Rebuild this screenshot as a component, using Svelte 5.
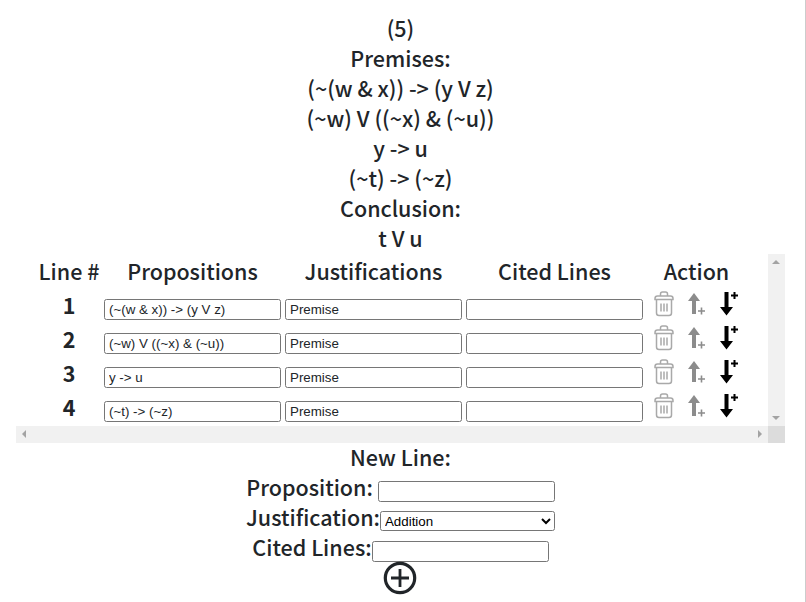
<script>
  const lines = [
    { n: 1, prop: '(~(w & x)) -> (y V z)' },
    { n: 2, prop: '(~w) V ((~x) & (~u))' },
    { n: 3, prop: 'y -> u' },
    { n: 4, prop: '(~t) -> (~z)' }
  ];
  const info = ['(5)', 'Premises:', ...lines.map((l) => l.prop), 'Conclusion:', 't V u'];
</script>

<main class="page">
  {#each info as text}
    <div>{text}</div>
  {/each}

  <div class="scroller">
    <div class="view">
      <div class="row head">
        <div>Line #</div>
        <div>Propositions</div>
        <div>Justifications</div>
        <div>Cited Lines</div>
        <div>Action</div>
      </div>
      {#each lines as line}
        <div class="row">
          <div class="num">{line.n}</div>
          <input type="text" value={line.prop} />
          <input type="text" value="Premise" />
          <input type="text" value="" />
          <div class="actions">
            <svg width="21" height="26" viewBox="0 0 21 26" fill="none" stroke="#a9a9a9" stroke-width="1.500">
              <path d="M1 7.500Q1 5 3.500 5h13Q19 5 19 7.500v1H1zM6.500 5V3Q6.500 1 8.500 1h3Q13.500 1 13.500 3V5" />
              <path d="M2.500 9v13q0 2.500 2.500 2.500h10q2.500 0 2.500-2.500V9" />
              <path d="M7 12.500v8M10 12.500v8M13 12.500v8" />
            </svg>
            <svg width="19" height="26" viewBox="0 0 19 26" fill="#8c8c8c">
              <path d="M6 2l6 8h-4v13h-4v-13h-4z" />
              <path d="M12.700 16.500h1.600v2.700h2.700v1.600h-2.700v2.700h-1.600v-2.700h-2.700v-1.600h2.700z" />
            </svg>
            <svg width="20" height="26" viewBox="0 0 20 26" fill="#000">
              <path d="M4.500 1h4v15h4.500l-6.500 8.500-6.500-8.500h4.500z" />
              <path d="M13.500 1h2v2.500h2.500v2h-2.500v2.500h-2v-2.500h-2.500v-2h2.500z" />
            </svg>
          </div>
        </div>
      {/each}
    </div>
    <div class="vbar">
      <span class="tri up"></span>
      <span class="tri down"></span>
    </div>
    <div class="hbar">
      <span class="tri left"></span>
      <span class="tri right"></span>
    </div>
    <div class="corner"></div>
  </div>

  <div>New Line:</div>
  <div class="field">Proposition: <input type="text" /></div>
  <div class="field">Justification:<select><option>Addition</option></select></div>
  <div class="field">Cited Lines:<input type="text" /></div>
  <div class="add">
    <svg width="34" height="34" viewBox="0 0 34 34" fill="none" stroke="#212529">
      <circle cx="17" cy="17" r="14.700" stroke-width="3.200" />
      <path d="M17 8v18M8 17h18" stroke-width="2.800" />
    </svg>
  </div>
</main>

<style>
  :global(body) {
    background: #fff;
  }

  .page {
    box-sizing: border-box;
    width: 806px;
    height: 602px;
    padding: 13px 4px 0 0;
    border-right: 1px solid #ccc;
    overflow: hidden;
    text-align: center;
    font-family: "Noto Sans CJK JP", "Noto Sans", sans-serif;
    font-size: 21.500px;
    font-weight: 500;
    line-height: 30px;
    color: #212529;
  }

  .scroller {
    display: grid;
    grid-template-columns: 752px 17px;
    grid-template-rows: 172px 17px;
    margin: 1px 0 -1px 16px;
    width: 769px;
  }

  .view {
    padding-left: 20px;
    overflow: hidden;
  }

  .row {
    display: grid;
    grid-template-columns: 66px 181px 181px 181px 103px;
    height: 34px;
    align-items: center;
  }

  .row input {
    width: 177px;
    justify-self: center;
    margin-top: 6px;
  }

  .head {
    height: 36px;
    margin-top: -1px;
  }

  .num {
    margin-top: -3px;
    font-weight: 700;
  }

  .actions {
    display: flex;
    align-items: center;
    gap: 13px;
    padding-left: 9px;
    margin-top: -4px;
  }

  input,
  select {
    box-sizing: border-box;
    height: 21px;
    width: 177px;
    padding: 1px 4px;
    border: 1px solid #767676;
    border-radius: 2.500px;
    background: #fff;
    font-family: "Liberation Sans", Arial, sans-serif;
    font-size: 13.333px;
    color: #212529;
    vertical-align: middle;
  }

  select {
    width: 175px;
    height: 20px;
    padding: 0;
    color: #000;
  }

  .field input,
  .field select {
    margin-top: 2px;
  }

  .vbar,
  .hbar {
    position: relative;
    background: #f1f1f1;
  }

  .corner {
    background: #dcdcdc;
  }

  .tri {
    position: absolute;
    width: 0;
    height: 0;
    border: 4px solid transparent;
  }

  .up {
    top: 2px;
    left: 4px;
    border-bottom-color: #a3a3a3;
  }

  .down {
    bottom: 2px;
    left: 4px;
    border-top-color: #a3a3a3;
  }

  .left {
    top: 4px;
    left: 2px;
    border-right-color: #a3a3a3;
  }

  .right {
    top: 4px;
    right: 2px;
    border-left-color: #a3a3a3;
  }

  .add {
    height: 34px;
    line-height: 0;
    margin: -1px 2px 0 0;
  }
</style>
